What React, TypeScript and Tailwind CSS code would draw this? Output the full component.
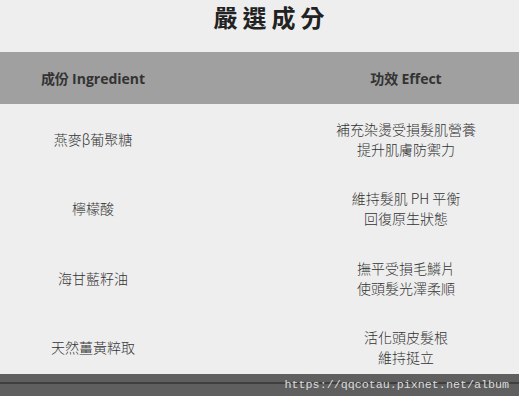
import React from 'react';

const rows = [
  { name: '燕麥β葡聚糖', effect: ['補充染燙受損髮肌營養', '提升肌膚防禦力'] },
  { name: '檸檬酸', effect: ['維持髮肌 PH 平衡', '回復原生狀態'] },
  { name: '海甘藍籽油', effect: ['撫平受損毛鱗片', '使頭髮光澤柔順'] },
  { name: '天然薑黃粹取', effect: ['活化頭皮髮根', '維持挺立'] },
];

const cjk = { fontFamily: '"Noto Sans CJK TC", "Noto Sans", sans-serif' };

const App: React.FC = () => {
  return (
    <div className="relative h-[396px] w-[519px] overflow-hidden bg-[#eeeeee]" style={cjk}>
      {/* Title */}
      <div className="flex h-[52px] justify-center pl-[24px]">
        <h1 className="text-[24px] leading-[33px] font-bold tracking-[5px] text-[#222]">嚴選成分</h1>
      </div>

      {/* Table */}
      <div className="w-[626px]">
        <div className="grid h-[52px] grid-cols-[186px_440px] items-center bg-[#a0a0a0] text-[14px] font-bold text-[#333]">
          <div className="text-center">
            成份 <span style={{ fontFamily: '"Open Sans", "Noto Sans", sans-serif' }}>Ingredient</span>
          </div>
          <div className="text-center">
            功效 <span style={{ fontFamily: '"Open Sans", "Noto Sans", sans-serif' }}>Effect</span>
          </div>
        </div>

        <div>
          {rows.map((row) => (
            <div
              key={row.name}
              className="grid h-[69.5px] grid-cols-[186px_440px] items-center text-[14px] leading-[20px] font-light text-[#333]"
            >
              <div className="text-center">{row.name}</div>
              <div className="text-center">
                {row.effect.map((line) => (
                  <div key={line}>{line}</div>
                ))}
              </div>
            </div>
          ))}
        </div>
      </div>

      {/* Bottom bar with watermark */}
      <div className="absolute bottom-0 left-0 h-[22px] w-full bg-[#5f5f5f]">
        <div className="mt-[8px] h-[2px] w-full bg-[#3f3f3f]" />
        <span
          className="absolute top-[3px] right-[10px] text-[11.7px] leading-[16px] text-[#dcdcdc]"
          style={{ fontFamily: '"Liberation Mono", monospace' }}
        >
          https://qqcotau.pixnet.net/album
        </span>
      </div>
    </div>
  );
};

export default App;
